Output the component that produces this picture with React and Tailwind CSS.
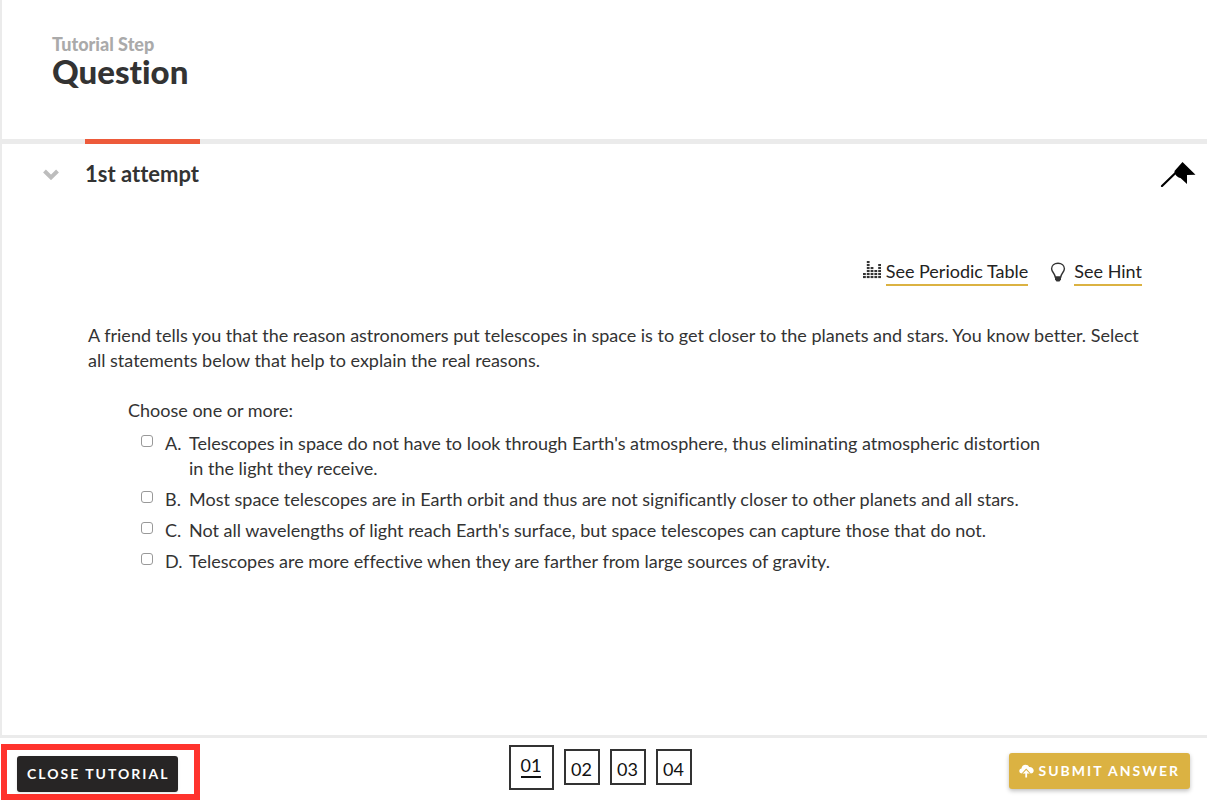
import { useState } from 'react';

const CHOICES = [
  {
    letter: 'A',
    text: "Telescopes in space do not have to look through Earth's atmosphere, thus eliminating atmospheric distortion in the light they receive.",
  },
  {
    letter: 'B',
    text: 'Most space telescopes are in Earth orbit and thus are not significantly closer to other planets and all stars.',
  },
  {
    letter: 'C',
    text: "Not all wavelengths of light reach Earth's surface, but space telescopes can capture those that do not.",
  },
  {
    letter: 'D',
    text: 'Telescopes are more effective when they are farther from large sources of gravity.',
  },
];

const STEPS = ['01', '02', '03', '04'];

// Dots per column, left to right
const DOT_COLUMNS = [2, 6, 4, 3, 5];

function ChevronIcon() {
  return (
    <svg viewBox="0 0 16 12" className="w-4 h-3" aria-hidden="true">
      <path d="M1.5 3 L8 9.4 L14.5 3" fill="none" stroke="#bdbdbd" strokeWidth="4" />
    </svg>
  );
}

function FlagIcon() {
  return (
    <svg viewBox="0 0 36 26" className="w-9 h-[26px]" aria-hidden="true">
      <path d="M2 25 L17 10.5" stroke="#000" strokeWidth="2.2" strokeLinecap="round" />
      <path d="M22.5 1 L35.5 13.8 L27 14 L27 23 L20.5 17 C17.5 16.5 14.5 14 14.5 10 Z" fill="#000" />
    </svg>
  );
}

function PeriodicTableIcon() {
  return (
    <svg viewBox="0 0 20 18" className="w-5 h-[18px]" aria-hidden="true">
      {DOT_COLUMNS.map((count, col) =>
        Array.from({ length: count }, (_, row) => (
          <rect key={`${col}-${row}`} x={1 + col * 3.8} y={15 - row * 3} width="2.8" height="2.1" fill="#333" />
        ))
      )}
    </svg>
  );
}

function BulbIcon() {
  return (
    <svg viewBox="0 0 16 20" className="w-4 h-5" aria-hidden="true">
      <path
        d="M5.2 15 C5 11.5 1.6 10 1.6 6.8 C1.6 3.4 4.4 1.2 8 1.2 C11.6 1.2 14.4 3.4 14.4 6.8 C14.4 10 11 11.5 10.8 15 Z"
        fill="none"
        stroke="#333"
        strokeWidth="1.4"
      />
      <path d="M5 15 H11 V17.5 L9.5 19.5 H6.5 L5 17.5 Z" fill="#333" />
    </svg>
  );
}

function CloudUploadIcon() {
  return (
    <svg viewBox="0 0 15 14" className="w-[15px] h-[14px]" aria-hidden="true">
      <path
        d="M3 9.5 C1.2 9.5 0.3 8.4 0.3 7 C0.3 5.6 1.3 4.6 2.5 4.5 C2.6 2.2 4.3 0.8 6.5 0.8 C8.3 0.8 9.5 1.7 10.1 3 C12.5 2.8 14.7 4.3 14.7 6.6 C14.7 8.4 13.5 9.5 11.8 9.5 Z"
        fill="#fff"
      />
      <path d="M7.2 4.5 L12 9.7 H8.9 V14 H5.5 V9.7 H2.4 Z" fill="#dbb242" />
      <path d="M7.2 6 L10.6 9.6 H8.1 V13.6 H6.3 V9.6 H3.8 Z" fill="#fff" />
    </svg>
  );
}

function Choice({ letter, text, checked, onChange }) {
  return (
    <li>
      <label className="flex items-start">
        <input
          type="checkbox"
          checked={checked}
          onChange={onChange}
          className="appearance-none shrink-0 w-3 h-3 mt-1 mr-3 border border-[#999] rounded-[3px] bg-white checked:bg-[#333]"
        />
        <span className="shrink-0 w-6">{letter}.</span>
        <span>{text}</span>
      </label>
    </li>
  );
}

export default function App() {
  const [selected, setSelected] = useState([]);
  const [step, setStep] = useState('01');

  const toggle = (letter) =>
    setSelected((prev) => (prev.includes(letter) ? prev.filter((l) => l !== letter) : [...prev, letter]));

  return (
    <div className="min-h-screen flex flex-col bg-white font-['Lato',sans-serif] text-[18px] leading-[25px] text-[#333] [font-variant-ligatures:none]">
      <div className="grow flex flex-col border-l-2 border-[#ebebeb]">
        <header className="px-[50px] pt-[34px] pb-[51px]">
          <p className="text-[18px] leading-5 font-black text-[#aaa]">Tutorial Step</p>
          <h1 className="text-[33px] leading-[34px] font-black">Question</h1>
        </header>

        <main className="grow">
          <div className="h-[5px] bg-[#ebebeb] pl-[83px]">
            <div className="h-full w-[115px] bg-[#ed5a3a]" />
          </div>

          <div className="flex items-center pl-[41px] pr-[11px] pt-4">
            <button type="button" aria-label="Collapse attempt" className="mr-[26px]">
              <ChevronIcon />
            </button>
            <h2 className="grow text-[22px] leading-[27px] font-bold">1st attempt</h2>
            <button type="button" aria-label="Flag question">
              <FlagIcon />
            </button>
          </div>

          <div className="flex justify-end pr-[65px] pt-[72px] text-[#222]">
            <div className="flex mr-[22px]">
              <span className="pt-[2px] mr-1">
                <PeriodicTableIcon />
              </span>
              <a href="#periodic-table" className="border-b-2 border-[#dbb242]">
                See Periodic Table
              </a>
            </div>
            <div className="flex">
              <span className="pt-[3px] mr-2">
                <BulbIcon />
              </span>
              <a href="#hint" className="border-b-2 border-[#dbb242]">
                See Hint
              </a>
            </div>
          </div>

          <p className="pt-[37px] pl-[86px] pr-14">
            A friend tells you that the reason astronomers put telescopes in space is to get closer to the planets and
            stars. You know better. Select all statements below that help to explain the real reasons.
          </p>

          <fieldset className="pt-[25px] pl-[126px] pr-40">
            <legend className="float-left w-full">Choose one or more:</legend>
            <ul className="clear-both pt-2 pl-[13px] flex flex-col gap-[6px]">
              {CHOICES.map((choice) => (
                <Choice
                  key={choice.letter}
                  {...choice}
                  checked={selected.includes(choice.letter)}
                  onChange={() => toggle(choice.letter)}
                />
              ))}
            </ul>
          </fieldset>
        </main>
      </div>

      <footer className="border-t-[3px] border-[#ebebeb] grid grid-cols-[1fr_auto_1fr] items-start pt-[6px] pl-px pr-2">
        <div className="justify-self-start border-[6px] border-[#ff332d] pl-[10px] pr-4 pt-[6px] pb-[2px]">
          <button
            type="button"
            className="h-9 pl-[10px] pr-2 rounded-[3px] bg-[#272525] text-white text-[14px] leading-5 font-bold tracking-[2px] shadow-sm"
          >
            CLOSE TUTORIAL
          </button>
        </div>

        <nav aria-label="Steps" className="flex items-start gap-[10px] pt-px">
          {STEPS.map((s) => (
            <button
              key={s}
              type="button"
              onClick={() => setStep(s)}
              aria-current={s === step ? 'step' : undefined}
              className={`flex items-center justify-center border-2 border-[#333] text-[#111] ${
                s === step ? 'w-[45px] h-[45px] pb-1' : 'w-9 h-9 mt-1 pt-1'
              }`}
            >
              <span className={s === step ? 'border-b-2 border-[#111] leading-[22px]' : 'leading-[22px]'}>{s}</span>
            </button>
          ))}
        </nav>

        <button
          type="button"
          className="justify-self-end flex items-center gap-[5px] h-9 mt-[9px] mr-[9px] px-[10px] rounded-[3px] bg-[#dbb242] text-white text-[14px] leading-5 font-bold tracking-[2px] shadow-[0_2px_4px_rgba(0,0,0,0.25)]"
        >
          <CloudUploadIcon />
          SUBMIT ANSWER
        </button>
      </footer>
    </div>
  );
}
